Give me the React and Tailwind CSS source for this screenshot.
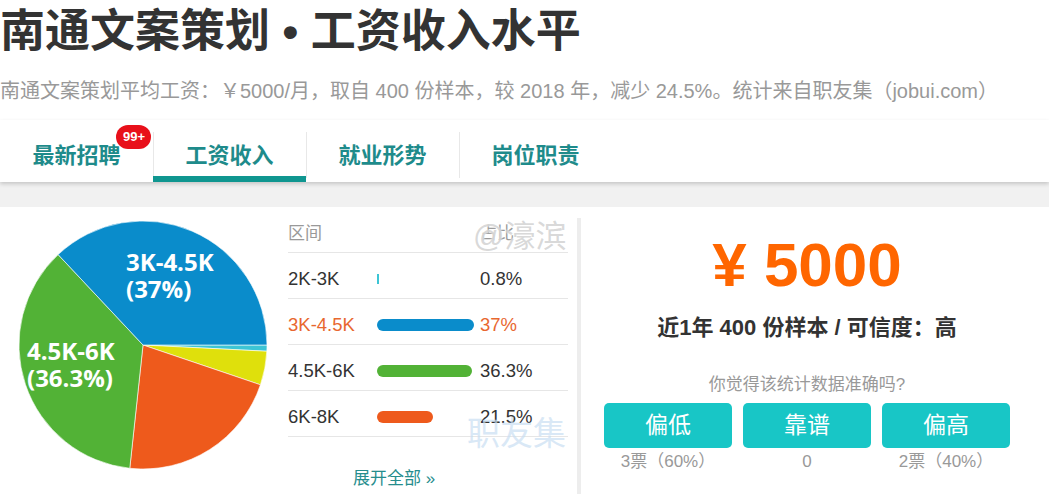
const FONT = { fontFamily: '"Liberation Sans", "Noto Sans CJK SC", sans-serif' };

const tabs = [
    { label: "最新招聘", badge: "99+" },
    { label: "工资收入", active: true },
    { label: "就业形势" },
    { label: "岗位职责" },
];

const rows = [
    { range: "2K-3K", pct: 0.8, text: "0.8%", color: "#3cc5d5" },
    { range: "3K-4.5K", pct: 37, text: "37%", color: "#0a8ccb", hot: true },
    { range: "4.5K-6K", pct: 36.3, text: "36.3%", color: "#52b236" },
    { range: "6K-8K", pct: 21.5, text: "21.5%", color: "#ee5a1c" },
];

// pie slices clockwise from 3 o'clock
const slices = [
    { v: 0.8, color: "#3cc5d5" },
    { v: 4.4, color: "#dfe00c" },
    { v: 21.5, color: "#ee5a1c" },
    { v: 36.3, color: "#52b236" },
    { v: 37, color: "#0a8ccb" },
];

function Pie() {
    const cx = 125, cy = 125, r = 124;
    let start = 0;
    const paths = slices.map((s, i) => {
        const a0 = (start / 100) * Math.PI * 2;
        start += s.v;
        const a1 = (start / 100) * Math.PI * 2;
        const large = a1 - a0 > Math.PI ? 1 : 0;
        const d = `M${cx},${cy} L${cx + r * Math.cos(a0)},${cy + r * Math.sin(a0)} A${r},${r} 0 ${large} 1 ${cx + r * Math.cos(a1)},${cy + r * Math.sin(a1)} Z`;
        return <path key={i} d={d} fill={s.color} stroke="#fff" strokeWidth="0.6" />;
    });
    return (
        <svg width="250" height="250" viewBox="0 0 250 250">
            {paths}
            <g fill="#fff" fontWeight="700" fontSize="24" style={{ fontFamily: '"Open Sans", sans-serif' }}>
                <text x="108" y="51">3K-4.5K</text>
                <text x="108" y="78">(37%)</text>
                <text x="9" y="140">4.5K-6K</text>
                <text x="9" y="167">(36.3%)</text>
            </g>
        </svg>
    );
}

export default function App() {
    return (
        <div className="relative w-[1049px] h-[494px] overflow-hidden bg-white" style={FONT}>
            <div className="h-[62px] flex items-center">
                <h1 className="text-[45px] font-bold text-[#333] leading-none">南通文案策划 • 工资收入水平</h1>
            </div>
            <div className="h-[58px] flex items-center">
                <p className="text-[20px] text-[#999] leading-none">南通文案策划平均工资：￥5000/月，取自 400 份样本，较 2018 年，减少 24.5%。统计来自职友集（jobui.com）</p>
            </div>

            <div className="relative z-10 h-[62px] flex bg-white shadow-[0_2px_4px_rgba(0,0,0,0.18)]">
                {tabs.map((t, i) => (
                    <div key={t.label} className="relative w-[153px] h-full flex items-center justify-center">
                        {i > 0 && <div className="absolute left-0 top-[12px] bottom-[4px] w-px bg-[#e8e8e8]" />}
                        <span className="relative text-[22px] font-bold text-[#1e8b8b] mt-[8px]">
                            {t.label}
                            {t.badge && (
                                <span className="absolute left-[84px] top-[-14px] w-[35px] h-[24px] rounded-full bg-[#e8101a] text-white text-[13px] font-bold flex items-center justify-center">{t.badge}</span>
                            )}
                        </span>
                        {t.active && <div className="absolute left-0 right-0 bottom-0 h-[6px] bg-[#0f9690]" />}
                    </div>
                ))}
            </div>
            <div className="h-[25px] bg-[#f1f1f1]" />

            <div className="flex h-[287px]">
                <div className="pl-[18px] pt-[13px] w-[288px]">
                    <Pie />
                </div>

                <div className="w-[280px] pt-[8px]">
                    <div className="h-[38px] flex items-center text-[17px] text-[#999] border-b border-[#e6e6e6]">
                        <span className="w-[192px]">区间</span>
                        <span>占比</span>
                    </div>
                    {rows.map((r) => (
                        <div key={r.range} className={`h-[46px] pt-[7px] flex items-center text-[18.5px] border-b border-[#e6e6e6] ${r.hot ? "text-[#e8672f]" : "text-[#333]"}`}>
                            <span className="w-[89px]">{r.range}</span>
                            <div className="w-[103px]">
                                {r.pct < 2 ? (
                                    <div className="w-[2px] h-[10px]" style={{ background: r.color }} />
                                ) : (
                                    <div className="h-[12px] rounded-full" style={{ width: `${(r.pct / 37) * 97}px`, background: r.color }} />
                                )}
                            </div>
                            <span>{r.text}</span>
                        </div>
                    ))}
                    <div className="mt-[33px] pl-[65px] text-[17px] text-[#268d8d] leading-none">展开全部 »</div>
                </div>

                <div className="ml-[9px] mt-[11px] w-[4px] bg-[#ededed]" />

                <div className="ml-[23px] w-[406px] pt-[27px] text-center">
                    <div className="h-[62px] leading-[62px] text-[62px] font-bold text-[#ff6600]">¥ 5000</div>
                    <div className="mt-[17px] h-[30px] leading-[30px] text-[22px] font-bold text-[#333]">近1年 400 份样本 / 可信度：高</div>
                    <div className="mt-[31px] h-[22px] leading-[22px] text-[17px] text-[#999]">你觉得该统计数据准确吗?</div>
                    <div className="mt-[7px] flex gap-[11px]">
                        {["偏低", "靠谱", "偏高"].map((b) => (
                            <button key={b} className="w-[128px] h-[45px] rounded-[5px] bg-[#18c6c6] text-white text-[23px]">{b}</button>
                        ))}
                    </div>
                    <div className="mt-[4px] flex gap-[11px] text-[17px] text-[#999] leading-[20px]">
                        <span className="w-[128px]">3票（60%）</span>
                        <span className="w-[128px]">0</span>
                        <span className="w-[128px]">2票（40%）</span>
                    </div>
                </div>
            </div>

            <div className="absolute left-[473px] top-[221px] text-[31px] text-[#c8c8c8]/70 leading-none [text-shadow:0_0_2px_#fff]">@濠滨</div>
            <div className="absolute left-[467px] top-[417px] text-[33px] text-[#c9def2]/70 leading-none">职友集</div>
        </div>
    );
}
